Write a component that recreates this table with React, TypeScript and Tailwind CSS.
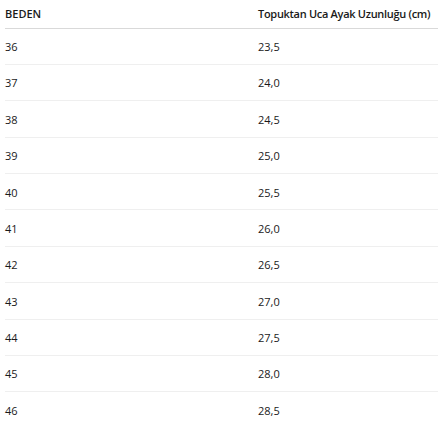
const rows: [string, string][] = [
  ["36", "23,5"],
  ["37", "24,0"],
  ["38", "24,5"],
  ["39", "25,0"],
  ["40", "25,5"],
  ["41", "26,0"],
  ["42", "26,5"],
  ["43", "27,0"],
  ["44", "27,5"],
  ["45", "28,0"],
  ["46", "28,5"],
];

const App = () => {
  return (
    <div className="bg-white w-[438px] h-[422px] overflow-hidden pl-[5px] font-['Open_Sans',sans-serif] text-[11px] text-[#1a1a1a]">
      <table className="w-[433px] border-collapse table-fixed">
        <thead>
          <tr className="border-b border-[#d9d9d9] h-[28px]">
            <th className="w-[253px] p-0 text-left font-semibold">BEDEN</th>
            <th className="p-0 text-left font-semibold whitespace-nowrap tracking-[-0.3px]">
              Topuktan Uca Ayak Uzunluğu (cm)
            </th>
          </tr>
        </thead>
        <tbody>
          {rows.map(([size, length]) => (
            <tr key={size} className="border-b border-[#efefef] h-[36.4px]">
              <td className="p-0 pt-[2px]">{size}</td>
              <td className="p-0 pt-[2px]">{length}</td>
            </tr>
          ))}
        </tbody>
      </table>
    </div>
  );
};

export default App;
